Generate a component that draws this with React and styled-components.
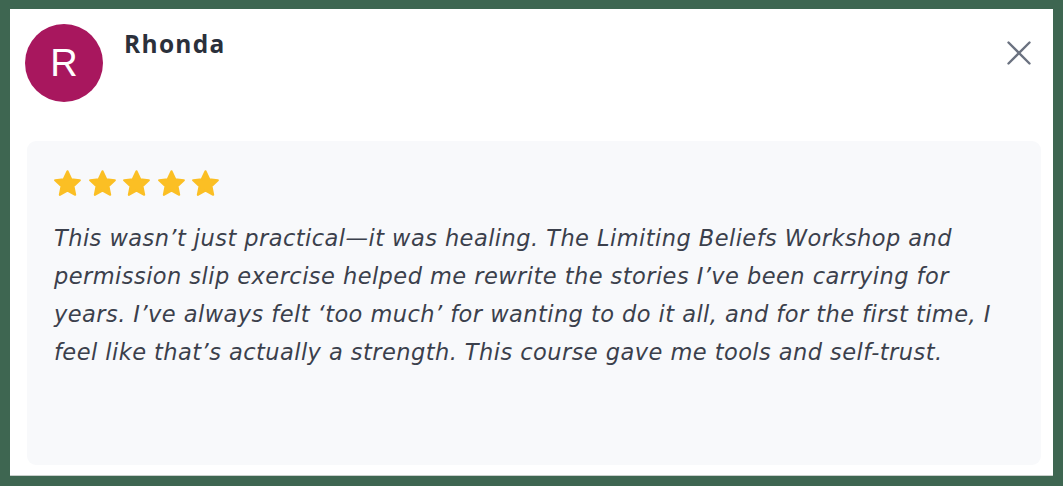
import React from 'react'
import styled, { createGlobalStyle } from 'styled-components'

const Global = createGlobalStyle`
    html, body {
        margin: 0;
        padding: 0;
        background: #3e6651;
    }
    body {
        width: 1063px;
        height: 486px;
        overflow: hidden;
    }
`

const Page = styled.div`
    padding: 9px 10px 0 10px;
`
const Card = styled.div`
    width: 1043px;
    height: 467px;
    box-sizing: border-box;
    background: #fff;
    border-bottom: 1px solid #c9cfcc;
    padding: 15px 12px 10px 17px;
    display: flex;
    flex-direction: column;
`
const Header = styled.div`
    display: flex;
    align-items: flex-start;
    margin-left: -2px;
    height: 117px;
    flex-shrink: 0;
`
const Avatar = styled.div`
    width: 78px;
    height: 78px;
    border-radius: 50%;
    background: #a8175e;
    color: #fff;
    display: flex;
    align-items: center;
    justify-content: center;
    font-family: "Liberation Sans", Arial, sans-serif;
    font-size: 38px;
    flex-shrink: 0;
`
const Name = styled.div`
    margin-left: 21px;
    margin-top: 3px;
    font-family: "Open Sans", Lato, sans-serif;
    font-weight: 700;
    font-size: 24.5px;
    letter-spacing: 1.3px;
    color: #2b303b;
    flex: 1;
`
const Close = styled.button`
    border: none;
    background: none;
    padding: 0;
    margin-top: 17px;
    margin-right: 10px;
    width: 24px;
    height: 24px;
    cursor: pointer;
    color: #6b7280;
`
const Panel = styled.div`
    flex: 1;
    background: #f8f9fb;
    border-radius: 9px;
    padding: 29px 27px 0 27px;
`
const Stars = styled.div`
    display: flex;
    gap: 7.5px;
`
const Quote = styled.p`
    margin: 22px 0 0 0;
    font-family: "DejaVu Sans", "Open Sans", sans-serif;
    font-style: italic;
    font-size: 22.5px;
    letter-spacing: 0.45px;
    line-height: 38px;
    color: #3b404c;
    white-space: nowrap;
`

const Star = () => (
    <svg width="27" height="27" viewBox="1.6 1.5 20.8 20.2">
        <path
            d="M12 2.2l2.9 6.1 6.6.8-4.9 4.6 1.3 6.6L12 17l-5.9 3.3 1.3-6.6-4.9-4.6 6.6-.8z"
            fill="#fbbf24"
            stroke="#fbbf24"
            strokeWidth="1.6"
            strokeLinejoin="round"
        />
    </svg>
)

const lines = [
    'This wasn’t just practical—it was healing. The Limiting Beliefs Workshop and',
    'permission slip exercise helped me rewrite the stories I’ve been carrying for',
    'years. I’ve always felt ‘too much’ for wanting to do it all, and for the first time, I',
    'feel like that’s actually a strength. This course gave me tools and self-trust.',
]

const App = () => {
    return (
        <>
            <Global />
            <Page>
                <Card>
                    <Header>
                        <Avatar>R</Avatar>
                        <Name>Rhonda</Name>
                        <Close aria-label="Close">
                            <svg width="24" height="24" viewBox="0 0 24 24">
                                <path d="M1.5 1.5L22.5 22.5M22.5 1.5L1.5 22.5" stroke="currentColor" strokeWidth="2.4" strokeLinecap="round" />
                            </svg>
                        </Close>
                    </Header>
                    <Panel>
                        <Stars>
                            {[0, 1, 2, 3, 4].map((i) => <Star key={i} />)}
                        </Stars>
                        <Quote>
                            {lines.map((l, i) => (
                                <React.Fragment key={i}>
                                    {l}
                                    {i < lines.length - 1 && <br />}
                                </React.Fragment>
                            ))}
                        </Quote>
                    </Panel>
                </Card>
            </Page>
        </>
    )
}

export default App
